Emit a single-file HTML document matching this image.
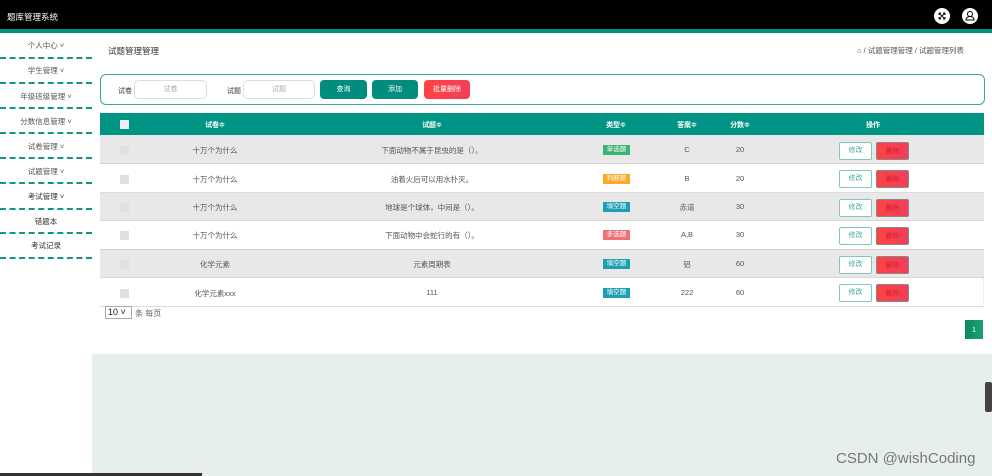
<!DOCTYPE html>
<html><head><meta charset="utf-8"><style>
*{margin:0;padding:0;box-sizing:border-box}
body{width:992px;height:476px;overflow:hidden;background:#fff;font-family:"Liberation Sans","Noto Sans CJK SC",sans-serif;font-size:8px;color:#333;position:relative}
.a{position:absolute}
.top{left:0;top:0;width:992px;height:29px;background:#000}
.strip{left:0;top:29px;width:992px;height:4px;background:#00907f}
.side .it{position:absolute;left:0;width:92px;text-align:center;font-size:7.5px;color:#555}
.side .ln{position:absolute;left:0;width:92px;border-top:2px dashed #139684}
.c{text-align:center;font-size:7.5px;color:#555}
.row{position:absolute;left:100px;width:884px}
.cb{position:absolute;left:120px;width:9px;height:9px;background:#dde0e4}
.tag{position:absolute;width:27px;height:10px;color:#fff;font-size:6.5px;text-align:center;line-height:10px}
.bm{position:absolute;left:839px;width:33px;height:18px;border:1px solid #7fc6bd;border-radius:2px;color:#4a9;font-size:7px;text-align:center;line-height:16px;background:#fff}
.bd{position:absolute;left:876px;width:33px;height:18px;background:linear-gradient(90deg,#ff4343,#f23e5a);border-radius:2px;color:#c23;font-size:7px;text-align:center;line-height:18px;border:1px solid #888}
</style></head><body>
<div class="a top"></div><div class="a strip"></div>
<div class="a" style="left:7px;top:11px;color:#fff;font-size:8.5px">题库管理系统</div>
<div class="a" style="left:934px;top:8px;width:16px;height:16px;border-radius:50%;background:#fff"><svg width="16" height="16"><path d="M5 5l6 6M11 5l-6 6M5 5h2M5 5v2M11 11h-2M11 11v-2M11 5h-2M11 5v2M5 11h2M5 11v-2" stroke="#000" stroke-width="0.9" fill="none"/></svg></div>
<div class="a" style="left:962px;top:8px;width:16px;height:16px;border-radius:50%;background:#fff"><svg width="16" height="16"><circle cx="8" cy="6" r="2.5" fill="none" stroke="#000"/><path d="M4 12h8c0-2.5-2-3.5-4-3.5s-4 1-4 3.5z" fill="none" stroke="#000"/></svg></div>

<div class="side">
<div class="it" style="top:40px">个人中心 ˅</div><div class="ln" style="top:57px"></div>
<div class="it" style="top:65px">学生管理 ˅</div><div class="ln" style="top:82px"></div>
<div class="it" style="top:91px">年级班级管理 ˅</div><div class="ln" style="top:107px"></div>
<div class="it" style="top:116px">分数信息管理 ˅</div><div class="ln" style="top:132px"></div>
<div class="it" style="top:141px">试卷管理 ˅</div><div class="ln" style="top:157px"></div>
<div class="it" style="top:166px">试题管理 ˅</div><div class="ln" style="top:182px"></div>
<div class="it" style="top:191px;color:#333">考试管理 ˅</div><div class="ln" style="top:208px"></div>
<div class="it" style="top:216px;color:#333">错题本</div><div class="ln" style="top:232px"></div>
<div class="it" style="top:240px;color:#333">考试记录</div><div class="ln" style="top:257px"></div>
</div>

<div class="a" style="left:108px;top:45px;font-size:8.5px;color:#333">试题管理管理</div>
<div class="a" style="left:857px;top:45px;font-size:7.5px;color:#555;white-space:nowrap">⌂ / 试题管理管理 / 试题管理列表</div>

<div class="a" style="left:100px;top:74px;width:885px;height:31px;border:1.5px solid #3aa898;border-radius:6px"></div>
<div class="a" style="left:118px;top:86px;font-size:7px">试卷</div>
<div class="a c" style="left:134px;top:80px;width:73px;height:19px;border:1px solid #ddd;border-radius:5px;line-height:18px;color:#aaa;font-size:7px">试卷</div>
<div class="a" style="left:227px;top:86px;font-size:7px">试题</div>
<div class="a c" style="left:243px;top:80px;width:72px;height:19px;border:1px solid #ddd;border-radius:5px;line-height:18px;color:#aaa;font-size:7px">试题</div>
<div class="a c" style="left:320px;top:80px;width:47px;height:19px;background:#008d7d;border-radius:4px;line-height:19px;color:#fff;font-size:7px">查询</div>
<div class="a c" style="left:372px;top:80px;width:46px;height:19px;background:#008d7d;border-radius:4px;line-height:19px;color:#fff;font-size:7px">添加</div>
<div class="a c" style="left:424px;top:80px;width:46px;height:19px;background:linear-gradient(90deg,#ff4343,#f23e5a);border-radius:4px;line-height:19px;color:#fff;font-size:7px">批量删除</div>

<div class="a" style="left:100px;top:113px;width:884px;height:22px;background:#009484"></div>
<div class="a" style="left:120px;top:120px;width:9px;height:9px;background:#eee"></div>
<div class="a c" style="left:185px;top:120px;width:60px;color:#fff;font-weight:bold;font-size:7px">试卷≑</div>
<div class="a c" style="left:402px;top:120px;width:60px;color:#fff;font-weight:bold;font-size:7px">试题≑</div>
<div class="a c" style="left:596px;top:120px;width:40px;color:#fff;font-weight:bold;font-size:7px">类型≑</div>
<div class="a c" style="left:667px;top:120px;width:40px;color:#fff;font-weight:bold;font-size:7px">答案≑</div>
<div class="a c" style="left:720px;top:120px;width:40px;color:#fff;font-weight:bold;font-size:7px">分数≑</div>
<div class="a c" style="left:853px;top:120px;width:40px;color:#fff;font-weight:bold;font-size:7px">操作</div>

<div class="row" style="top:135px;height:29px;background:#e8e8e8;border-bottom:1px solid #d6d6d6"></div>
<div class="row" style="top:164px;height:29px;background:#fff;border-bottom:1px solid #ddd"></div>
<div class="row" style="top:193px;height:28px;background:#e8e8e8;border-bottom:1px solid #d6d6d6"></div>
<div class="row" style="top:221px;height:29px;background:#fff;border-bottom:1px solid #ccc"></div>
<div class="row" style="top:250px;height:28px;background:#e8e8e8;border-bottom:1px solid #d6d6d6"></div>
<div class="row" style="top:278px;height:29px;background:#fff;border-bottom:1px solid #ddd;border-right:1px solid #eee"></div>

<div class="cb" style="top:146px"></div><div class="cb" style="top:175px"></div><div class="cb" style="top:203px"></div><div class="cb" style="top:231px"></div><div class="cb" style="top:260px"></div><div class="cb" style="top:289px"></div>

<div class="a c" style="left:165px;top:145px;width:100px">十万个为什么</div>
<div class="a c" style="left:165px;top:174px;width:100px">十万个为什么</div>
<div class="a c" style="left:165px;top:202px;width:100px">十万个为什么</div>
<div class="a c" style="left:165px;top:230px;width:100px">十万个为什么</div>
<div class="a c" style="left:165px;top:259px;width:100px">化学元素</div>
<div class="a c" style="left:165px;top:288px;width:100px">化学元素xxx</div>

<div class="a c" style="left:332px;top:145px;width:200px">下面动物不属于昆虫的是（）。</div>
<div class="a c" style="left:332px;top:174px;width:200px">油着火后可以用水扑灭。</div>
<div class="a c" style="left:332px;top:202px;width:200px">地球是个球体，中间是（）。</div>
<div class="a c" style="left:332px;top:230px;width:200px">下面动物中会蛇行的有（）。</div>
<div class="a c" style="left:332px;top:259px;width:200px">元素周期表</div>
<div class="a c" style="left:332px;top:288px;width:200px">111</div>

<div class="tag" style="left:603px;top:145px;background:#3cb371">单选题</div>
<div class="tag" style="left:603px;top:174px;background:#ffa726">判断题</div>
<div class="tag" style="left:603px;top:202px;background:#1e9fb5">填空题</div>
<div class="tag" style="left:603px;top:230px;background:#ec7274">多选题</div>
<div class="tag" style="left:603px;top:259px;background:#1e9fb5">填空题</div>
<div class="tag" style="left:603px;top:288px;background:#1e9fb5">填空题</div>

<div class="a c" style="left:667px;top:145px;width:40px">C</div>
<div class="a c" style="left:667px;top:174px;width:40px">B</div>
<div class="a c" style="left:667px;top:202px;width:40px">赤道</div>
<div class="a c" style="left:667px;top:230px;width:40px">A,B</div>
<div class="a c" style="left:667px;top:259px;width:40px">铝</div>
<div class="a c" style="left:667px;top:288px;width:40px">222</div>

<div class="a c" style="left:720px;top:145px;width:40px">20</div>
<div class="a c" style="left:720px;top:174px;width:40px">20</div>
<div class="a c" style="left:720px;top:202px;width:40px">30</div>
<div class="a c" style="left:720px;top:230px;width:40px">30</div>
<div class="a c" style="left:720px;top:259px;width:40px">60</div>
<div class="a c" style="left:720px;top:288px;width:40px">60</div>

<div class="bm" style="top:142px">修改</div><div class="bd" style="top:142px">删除</div>
<div class="bm" style="top:170px">修改</div><div class="bd" style="top:170px">删除</div>
<div class="bm" style="top:199px">修改</div><div class="bd" style="top:199px">删除</div>
<div class="bm" style="top:227px">修改</div><div class="bd" style="top:227px">删除</div>
<div class="bm" style="top:256px">修改</div><div class="bd" style="top:256px">删除</div>
<div class="bm" style="top:284px">修改</div><div class="bd" style="top:284px">删除</div>

<div class="a" style="left:105px;top:306px;width:27px;height:13px;border:1px solid #aaa;font-size:9px;line-height:11px;padding-left:2px;color:#222">10 ˅</div>
<div class="a" style="left:135px;top:308px;font-size:8px;color:#666">条 每页</div>
<div class="a c" style="left:965px;top:320px;width:18px;height:19px;background:linear-gradient(90deg,#0a8a60,#1ca070);color:#fff;line-height:19px">1</div>

<div class="a" style="left:92px;top:354px;width:900px;height:122px;background:#e6efea"></div>
<div class="a" style="left:0;top:473px;width:202px;height:3px;background:#333"></div>
<div class="a" style="left:836px;top:450px;font-size:15px;color:#777">CSDN @wishCoding</div>
<div class="a" style="left:985px;top:382px;width:7px;height:30px;background:#444;border-radius:2px"></div>
</body></html>
